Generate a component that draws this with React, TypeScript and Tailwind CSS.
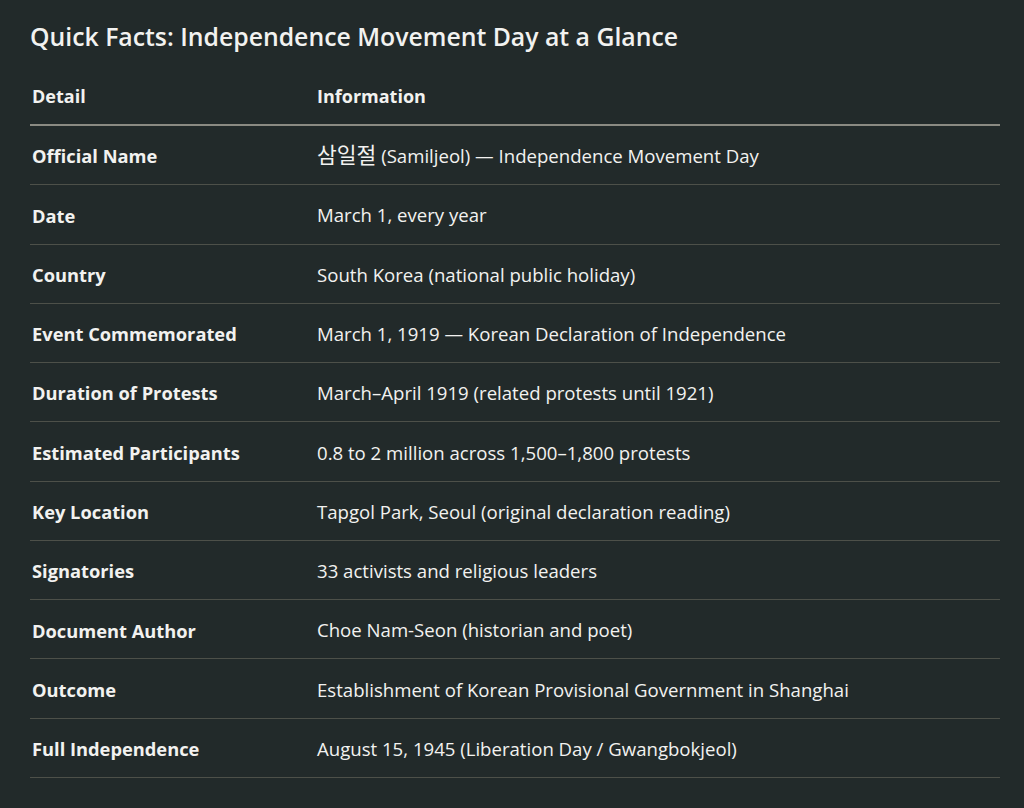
import React from 'react';

const facts = [
  { detail: 'Official Name', korean: '삼일절', info: ' (Samiljeol) — Independence Movement Day' },
  { detail: 'Date', info: 'March 1, every year' },
  { detail: 'Country', info: 'South Korea (national public holiday)' },
  { detail: 'Event Commemorated', info: 'March 1, 1919 — Korean Declaration of Independence' },
  { detail: 'Duration of Protests', info: 'March–April 1919 (related protests until 1921)' },
  { detail: 'Estimated Participants', info: '0.8 to 2 million across 1,500–1,800 protests' },
  { detail: 'Key Location', info: 'Tapgol Park, Seoul (original declaration reading)' },
  { detail: 'Signatories', info: '33 activists and religious leaders' },
  { detail: 'Document Author', info: 'Choe Nam-Seon (historian and poet)' },
  { detail: 'Outcome', info: 'Establishment of Korean Provisional Government in Shanghai' },
  { detail: 'Full Independence', info: 'August 15, 1945 (Liberation Day / Gwangbokjeol)' },
];

const App = () => {
  return (
    <div
      className="min-h-[808px] w-full bg-[#222a2a] text-[#f2f2f0] px-[30px] pt-[20px]"
      style={{ fontFamily: '"Open Sans", "Noto Sans CJK KR", sans-serif' }}
    >
      <h1 className="text-[24.8px] leading-[32px] font-semibold">
        Quick Facts: Independence Movement Day at a Glance
      </h1>

      <div className="w-[970px] mt-[16px]">
        {/* Header */}
        <div className="flex items-center h-[58px] border-b-2 border-[#8a8a82] text-[18px] font-bold">
          <div className="w-[287px] pl-[2px]">Detail</div>
          <div>Information</div>
        </div>

        {/* Rows */}
        {facts.map((row) => (
          <div
            key={row.detail}
            className="flex items-center h-[59.27px] border-b border-[#4d5049] text-[18.6px] pt-[2px]"
          >
            <div className="w-[287px] pl-[2px] text-[18.3px] font-bold">{row.detail}</div>
            <div className="whitespace-pre">
              {row.korean && (
                <span
                  className="text-[21.5px] leading-none"
                  style={{ fontFamily: '"Noto Sans CJK KR", sans-serif' }}
                >
                  {row.korean}
                </span>
              )}
              {row.info}
            </div>
          </div>
        ))}
      </div>
    </div>
  );
};

export default App;
